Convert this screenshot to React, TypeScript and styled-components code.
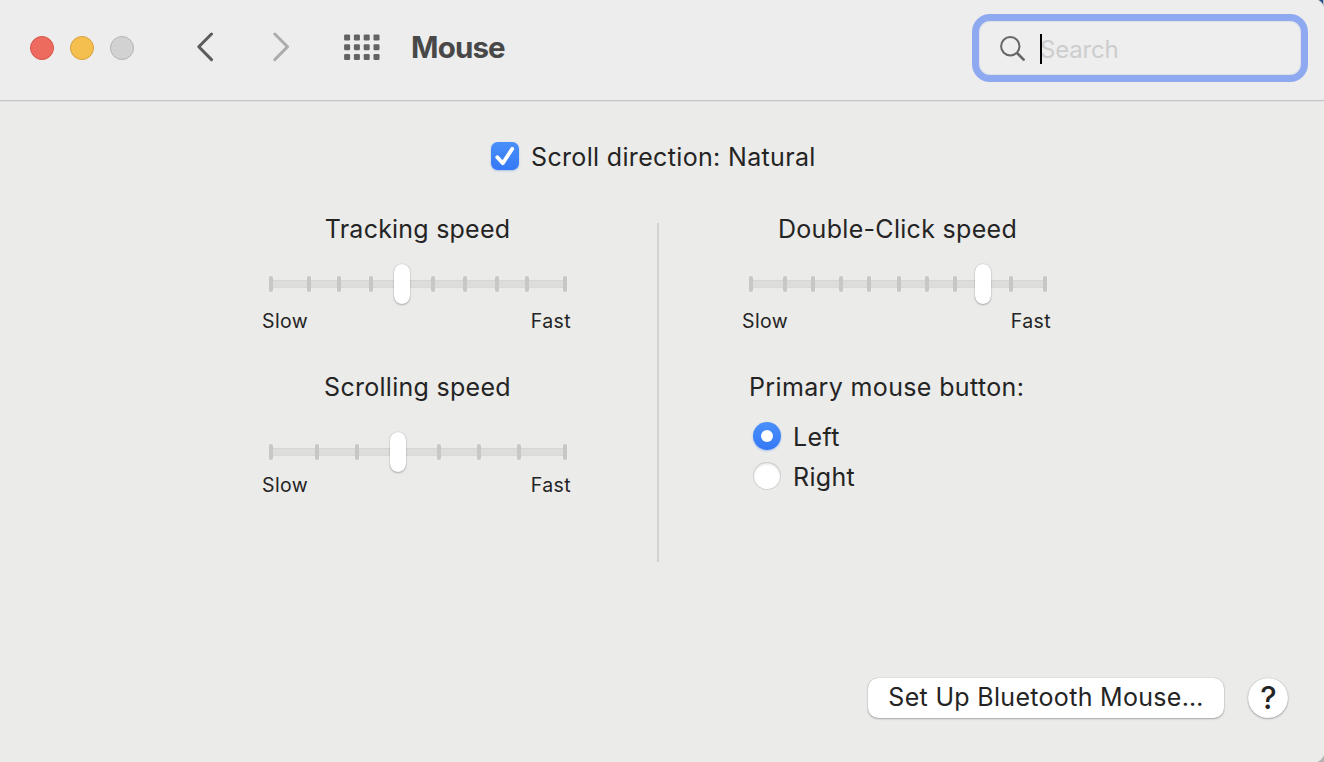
import React from "react";
import styled, { createGlobalStyle } from "styled-components";

const GlobalStyle = createGlobalStyle`
  *, *::before, *::after { box-sizing: border-box; }
  body { margin: 0; background: #ebebe9; }
`;

const Window = styled.div`
  position: relative;
  display: flex;
  flex-direction: column;
  width: 1324px;
  height: 762px;
  overflow: hidden;
  background: #ebebe9;
  color: #242424;
  font-family: Inter, "Liberation Sans", sans-serif;
  font-size: 25px;
  line-height: 32px;
  white-space: nowrap;
`;

const WindowCorner = styled.svg<{ $bottom?: boolean }>`
  position: absolute;
  right: 0;
  ${(p) => (p.$bottom ? "bottom: 0;" : "top: 0;")}
`;

const Toolbar = styled.header`
  display: flex;
  align-items: center;
  height: 101px;
  padding: 0 16px 5px 30px;
  background: #ededed;
  border-bottom: 1px solid #c4c4c4;
  box-shadow: 0 1px 0 #e2e2e0;
`;

const TrafficLights = styled.div`
  display: flex;
  gap: 16px;
  width: 167px;
`;

const Light = styled.span<{ $fill: string; $edge: string }>`
  width: 24px;
  height: 24px;
  border-radius: 50%;
  background: ${(p) => p.$fill};
  border: 1px solid ${(p) => p.$edge};
`;

const NavButton = styled.button<{ $color: string; $gap: number }>`
  display: flex;
  padding: 0;
  margin: 0 ${(p) => p.$gap}px 2px 0;
  border: 0;
  background: none;
  color: ${(p) => p.$color};
`;

const Title = styled.h1`
  flex: 1;
  margin: 0 0 2px 30px;
  font-size: 29.5px;
  font-weight: 700;
  letter-spacing: -0.85px;
  color: #484848;
`;

const SearchField = styled.div`
  display: flex;
  align-items: center;
  width: 336px;
  height: 68px;
  padding: 2px 0 0 21px;
  border: 7px solid #8ea9ef;
  border-radius: 18px;
  background: #eeeeee;
  color: #cdcdcd;
  box-shadow: inset 0 0 0 1px #e0e2e8;
`;

const Caret = styled.span`
  width: 2px;
  height: 30px;
  margin: 0 -2px 0 14px;
  background: #000;
  z-index: 1;
`;

const SearchText = styled.span`
  margin-top: 2px;
  font-size: 24px;
  letter-spacing: -0.2px;
`;

const Content = styled.main`
  flex: 1;
  display: flex;
  flex-direction: column;
`;

const CheckRow = styled.label`
  display: flex;
  align-items: center;
  gap: 12px;
  height: 32px;
  margin: 39px 0 0 491px;
`;

const CheckBox = styled.span`
  display: flex;
  width: 28px;
  height: 28px;
  border-radius: 6.5px;
  background: linear-gradient(#4a90f9, #3478f6);
  box-shadow: 0 1px 2px rgba(52, 120, 246, 0.35);
`;

const Label = styled.span<{ $drop?: number }>`
  margin-top: ${(p) => p.$drop ?? 0}px;
  letter-spacing: 0.34px;
`;

const Columns = styled.div`
  display: grid;
  grid-template-columns: 308px 2px 308px;
  column-gap: 87px;
  height: 339px;
  margin: 51px 0 0 262px;
`;

const Column = styled.section<{ $shift?: number }>`
  display: flex;
  flex-direction: column;
  width: 308px;
  margin-top: -10px;
  margin-left: ${(p) => p.$shift ?? 0}px;
`;

const Divider = styled.div`
  background: #d2d2d0;
`;

const SliderGroup = styled.div`
  display: flex;
  flex-direction: column;
  height: 158px;
`;

const Heading = styled.h2<{ $spacing: number; $left?: boolean }>`
  margin: 0 0 0 ${(p) => (p.$left ? 7 : 3)}px;
  font-size: 25px;
  font-weight: 400;
  text-align: ${(p) => (p.$left ? "left" : "center")};
  letter-spacing: ${(p) => p.$spacing}px;
`;

const Slider = styled.div<{ $top: number }>`
  position: relative;
  display: flex;
  align-items: center;
  width: 298px;
  height: 40px;
  margin: ${(p) => p.$top}px 0 0 7px;
`;

const Track = styled.div`
  flex: 1;
  height: 8px;
  margin: 0 2px;
  background: #dddddb;
  border-top: 1px solid #d5d5d3;
  border-bottom: 1px solid #d9d9d7;
`;

const Tick = styled.span`
  position: absolute;
  top: 12px;
  width: 4px;
  height: 16px;
  border-radius: 2px;
  background: #c7c7c5;
`;

const Knob = styled.span`
  position: absolute;
  top: 0;
  width: 16px;
  height: 40px;
  border-radius: 8px;
  background: #fff;
  box-shadow: 0 0 1px rgba(0, 0, 0, 0.3), 0 1px 2px rgba(0, 0, 0, 0.25);
`;

const Range = styled.div<{ $top: number }>`
  display: flex;
  justify-content: space-between;
  width: 309px;
  margin-top: ${(p) => p.$top}px;
  font-size: 19.5px;
  line-height: 24px;
  letter-spacing: 0.4px;
`;

const RadioList = styled.div`
  display: flex;
  flex-direction: column;
  gap: 8px;
  margin: 18px 0 0 11px;
`;

const RadioRow = styled.label`
  display: flex;
  align-items: center;
  gap: 12px;
`;

const Radio = styled.span<{ $on?: boolean }>`
  display: flex;
  align-items: center;
  justify-content: center;
  width: 28px;
  height: 28px;
  margin-bottom: 2px;
  border-radius: 50%;
  background: ${(p) => (p.$on ? "linear-gradient(#4a90f9, #3478f6)" : "#fff")};
  box-shadow: ${(p) =>
    p.$on
      ? "0 1px 2px rgba(52, 120, 246, 0.35)"
      : "inset 0 0 0 1px #cfcfcd, inset 0 2px 3px rgba(0, 0, 0, 0.12)"};

  &::after {
    content: "";
    display: ${(p) => (p.$on ? "block" : "none")};
    width: 12px;
    height: 12px;
    border-radius: 50%;
    background: #fff;
  }
`;

const Footer = styled.footer`
  display: flex;
  justify-content: flex-end;
  gap: 24px;
  margin: auto 36px 44px 0;
`;

const PushButton = styled.button<{ $round?: boolean }>`
  display: flex;
  align-items: center;
  justify-content: center;
  width: ${(p) => (p.$round ? 40 : 356)}px;
  height: 40px;
  padding: 0 0 2px ${(p) => (p.$round ? 1 : 0)}px;
  border: 0;
  border-radius: ${(p) => (p.$round ? 20 : 10)}px;
  background: #fff;
  color: #242424;
  font-family: inherit;
  font-size: ${(p) => (p.$round ? 31 : 25)}px;
  font-weight: ${(p) => (p.$round ? 500 : 400)};
  letter-spacing: 0.31px;
  box-shadow: 0 0 1px rgba(0, 0, 0, 0.35), 0 1px 2px rgba(0, 0, 0, 0.28);
`;

const GRID_ROWS = [0, 9.8, 19.6];
const GRID_COLS = [0, 9.8, 19.6, 29.4];

interface SpeedSliderProps {
  top: number;
  rangeTop: number;
  ticks: number[];
  value: number;
}

function SpeedSlider({ top, rangeTop, ticks, value }: SpeedSliderProps) {
  return (
    <>
      <Slider $top={top}>
        <Track />
        {ticks.map((x) => (
          <Tick key={x} style={{ left: x }} />
        ))}
        <Knob style={{ left: value }} />
      </Slider>
      <Range $top={rangeTop}>
        <span>Slow</span>
        <span>Fast</span>
      </Range>
    </>
  );
}

function Chevron({ d }: { d: string }) {
  return (
    <svg width="17" height="30" viewBox="0 0 17 30" fill="none" stroke="currentColor" strokeWidth="3" strokeLinecap="round" strokeLinejoin="round">
      <path d={d} />
    </svg>
  );
}

export default function App() {
  return (
    <Window>
      <GlobalStyle />
      <Toolbar>
        <TrafficLights>
          <Light $fill="#ed6a5e" $edge="#d5564b" />
          <Light $fill="#f5bf4f" $edge="#d8a03c" />
          <Light $fill="#d2d2d2" $edge="#b4b4b4" />
        </TrafficLights>
        <NavButton $color="#5c5c5c" $gap={59} aria-label="Back">
          <Chevron d="M14.5 2L1.8 14.8L14.5 27.6" />
        </NavButton>
        <NavButton $color="#acacac" $gap={54} aria-label="Forward">
          <Chevron d="M1.8 2L14.5 14.8L1.8 27.6" />
        </NavButton>
        <NavButton $color="#636363" $gap={0} aria-label="Show all">
          <svg width="37" height="28" viewBox="0 0 37 28" fill="currentColor">
            {GRID_ROWS.map((y) =>
              GRID_COLS.map((x) => <rect key={`${x}-${y}`} x={x + 0.1} y={y + 1.4} width="6" height="6" rx="1.2" />)
            )}
          </svg>
        </NavButton>
        <Title>Mouse</Title>
        <SearchField>
          <svg width="26" height="26" viewBox="0 0 26 26" fill="none" stroke="#666" strokeLinecap="round">
            <circle cx="10.3" cy="10.3" r="9.2" strokeWidth="2" />
            <path d="M17.3 17.3L23.6 23.6" strokeWidth="2.7" />
          </svg>
          <Caret />
          <SearchText>Search</SearchText>
        </SearchField>
      </Toolbar>
      <Content>
        <CheckRow>
          <CheckBox>
            <svg width="28" height="28" viewBox="0 0 28 28" fill="none" stroke="#fff" strokeWidth="3.8" strokeLinecap="round" strokeLinejoin="round">
              <path d="M6.3 15.2L11.8 21.2L21.3 6.8" />
            </svg>
          </CheckBox>
          <Label $drop={2}>Scroll direction: Natural</Label>
        </CheckRow>
        <Columns>
          <Column>
            <SliderGroup>
              <Heading $spacing={0.22}>Tracking speed</Heading>
              <SpeedSlider top={19} rangeTop={5} ticks={[0, 38, 68, 100, 162, 194, 226, 256, 294]} value={125} />
            </SliderGroup>
            <SliderGroup>
              <Heading $spacing={0.28}>Scrolling speed</Heading>
              <SpeedSlider top={29} rangeTop={1} ticks={[0, 46, 86, 168, 208, 248, 294]} value={121} />
            </SliderGroup>
          </Column>
          <Divider />
          <Column $shift={-4}>
            <SliderGroup>
              <Heading $spacing={0.3}>Double-Click speed</Heading>
              <SpeedSlider top={19} rangeTop={5} ticks={[0, 34, 62, 90, 118, 148, 176, 204, 260, 294]} value={226} />
            </SliderGroup>
            <Heading $spacing={0.36} $left>
              Primary mouse button:
            </Heading>
            <RadioList>
              <RadioRow>
                <Radio $on />
                <Label>Left</Label>
              </RadioRow>
              <RadioRow>
                <Radio />
                <Label>Right</Label>
              </RadioRow>
            </RadioList>
          </Column>
        </Columns>
        <Footer>
          <PushButton>Set Up Bluetooth Mouse…</PushButton>
          <PushButton $round aria-label="Help">?</PushButton>
        </Footer>
      </Content>
      <WindowCorner width="7" height="7" viewBox="0 0 7 7">
        <path d="M1 0H7V7Q5 2.5 1 0Z" fill="#b9bfc9" />
        <path d="M2 0H6V4Q4.5 1.6 2 0Z" fill="#234f8c" />
      </WindowCorner>
      <WindowCorner $bottom width="7" height="7" viewBox="0 0 7 7">
        <path d="M7 0V7H0.5Q5 5 7 0Z" fill="#b2b2b2" />
      </WindowCorner>
    </Window>
  );
}
